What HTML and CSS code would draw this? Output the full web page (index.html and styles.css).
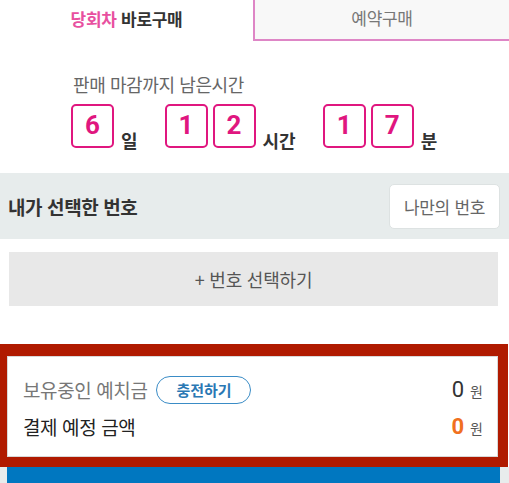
FILE: index.html
```html
<!DOCTYPE html>
<html lang="ko">
<head>
<meta charset="utf-8">
<link rel="stylesheet" href="styles.css">
</head>
<body>
<div class="tabs">
  <div class="tab tab-active"><span class="pink">당회차</span>&nbsp;바로구매</div>
  <div class="tab tab-other">예약구매</div>
</div>

<div class="timer">
  <div class="timer-title">판매 마감까지 남은시간</div>
  <div class="timer-row">
    <div class="group">
      <span class="digit">6</span>
      <span class="unit">일</span>
    </div>
    <div class="group">
      <span class="digit">1</span>
      <span class="digit">2</span>
      <span class="unit">시간</span>
    </div>
    <div class="group">
      <span class="digit">1</span>
      <span class="digit">7</span>
      <span class="unit">분</span>
    </div>
  </div>
</div>

<div class="mine-header">
  <div class="mine-title">내가 선택한 번호</div>
  <div class="mine-btn">나만의 번호</div>
</div>

<div class="add-wrap">
  <div class="add-btn">+ 번호 선택하기</div>
</div>

<div class="frame">
  <div class="card">
    <div class="row">
      <div class="label gray">보유중인 예치금 <span class="charge">충전하기</span></div>
      <div class="amount"><span class="num">0</span><span class="won">원</span></div>
    </div>
    <div class="row">
      <div class="label dark">결제 예정 금액</div>
      <div class="amount"><span class="num orange">0</span><span class="won">원</span></div>
    </div>
  </div>
</div>
<div class="bottom">
  <div class="blue"></div>
</div>
</body>
</html>
```

FILE: styles.css
```css
* { box-sizing: border-box; }
html, body { margin: 0; padding: 0; background: #fff; }
body {
  width: 509px;
  height: 483px;
  overflow: hidden;
  font-family: "Noto Sans CJK KR", "Noto Sans", sans-serif;
  color: #333;
}

.tabs { display: flex; height: 41px; }
.tab {
  flex: 1;
  display: flex;
  align-items: center;
  justify-content: center;
  font-size: 17px;
  letter-spacing: -0.3px;
  padding-bottom: 4px;
}
.tab-active { font-weight: 700; color: #333; width: 253px; flex: none; }
.pink { color: #e8509f; }
.tab-other {
  background: #f8f8f8;
  color: #777;
  border-left: 2px solid #de86c6;
  border-bottom: 2px solid #de86c6;
}

.timer { padding: 30px 0 0 73px; }
.timer-title {
  font-size: 18px;
  line-height: 26px;
  color: #666;
  letter-spacing: -0.4px;
}
.timer-row {
  display: flex;
  margin-top: 7px;
  margin-left: -2px;
  gap: 27px;
}
.group { display: flex; align-items: flex-end; gap: 5px; }
.digit {
  width: 43px;
  height: 44px;
  border: 2.5px solid #e0167f;
  border-radius: 5px;
  display: flex;
  align-items: center;
  justify-content: center;
  color: #e0167f;
  font-family: "Roboto", "Noto Sans", sans-serif;
  font-weight: 700;
  font-size: 26px;
  padding-bottom: 2px;
}
.unit {
  font-size: 18px;
  font-weight: 700;
  color: #333;
  line-height: 18px;
  margin-left: 2px;
  margin-bottom: -1px;
}

.mine-header {
  margin-top: 25px;
  height: 66px;
  background: #e7ecec;
  display: flex;
  align-items: center;
  justify-content: space-between;
  padding: 0 9px 0 8px;
}
.mine-title { font-size: 19px; font-weight: 700; color: #333; letter-spacing: -0.4px; }
.mine-btn {
  width: 111px;
  height: 45px;
  background: #fff;
  border: 1px solid #dde2e2;
  border-radius: 5px;
  display: flex;
  align-items: center;
  justify-content: center;
  font-size: 17px;
  color: #666;
  letter-spacing: -0.3px;
}

.add-wrap { padding: 13px 11px 0 9px; }
.add-btn {
  height: 54px;
  background: #e8e8e8;
  display: flex;
  align-items: center;
  justify-content: center;
  font-size: 18px;
  color: #555;
  letter-spacing: -0.2px;
}

.frame {
  margin-top: 38px;
  height: 123px;
  border-style: solid;
  border-color: #b01a00;
  border-width: 12px 10px 10px 7px;
  width: 508px;
}
.card {
  height: 100%;
  background: #fff;
  border: 1px solid #d8d8d8;
  padding: 14px 14px 0 15px;
}
.row {
  display: flex;
  align-items: center;
  justify-content: space-between;
  height: 37px;
}
.label { font-size: 19px; letter-spacing: -0.4px; display: flex; align-items: center; }
.gray { color: #777; }
.dark { color: #222; }
.charge {
  margin-left: 9px;
  width: 95px;
  height: 28px;
  border: 1.5px solid #3a8cc6;
  border-radius: 14px;
  display: inline-flex;
  align-items: center;
  justify-content: center;
  color: #2a78b4;
  font-weight: 700;
  font-size: 15px;
  letter-spacing: 0;
}
.amount { display: flex; align-items: baseline; }
.num {
  font-family: "Roboto", "Noto Sans", sans-serif;
  font-size: 22px;
  color: #333;
}
.orange { color: #f07020; font-weight: 700; }
.won { font-size: 14px; color: #555; margin-left: 6px; }

.bottom {
  background: #e8ecec;
  padding: 0 9px 0 7px;
  height: 20px;
}
.blue { background: #0077c0; height: 100%; }
```
